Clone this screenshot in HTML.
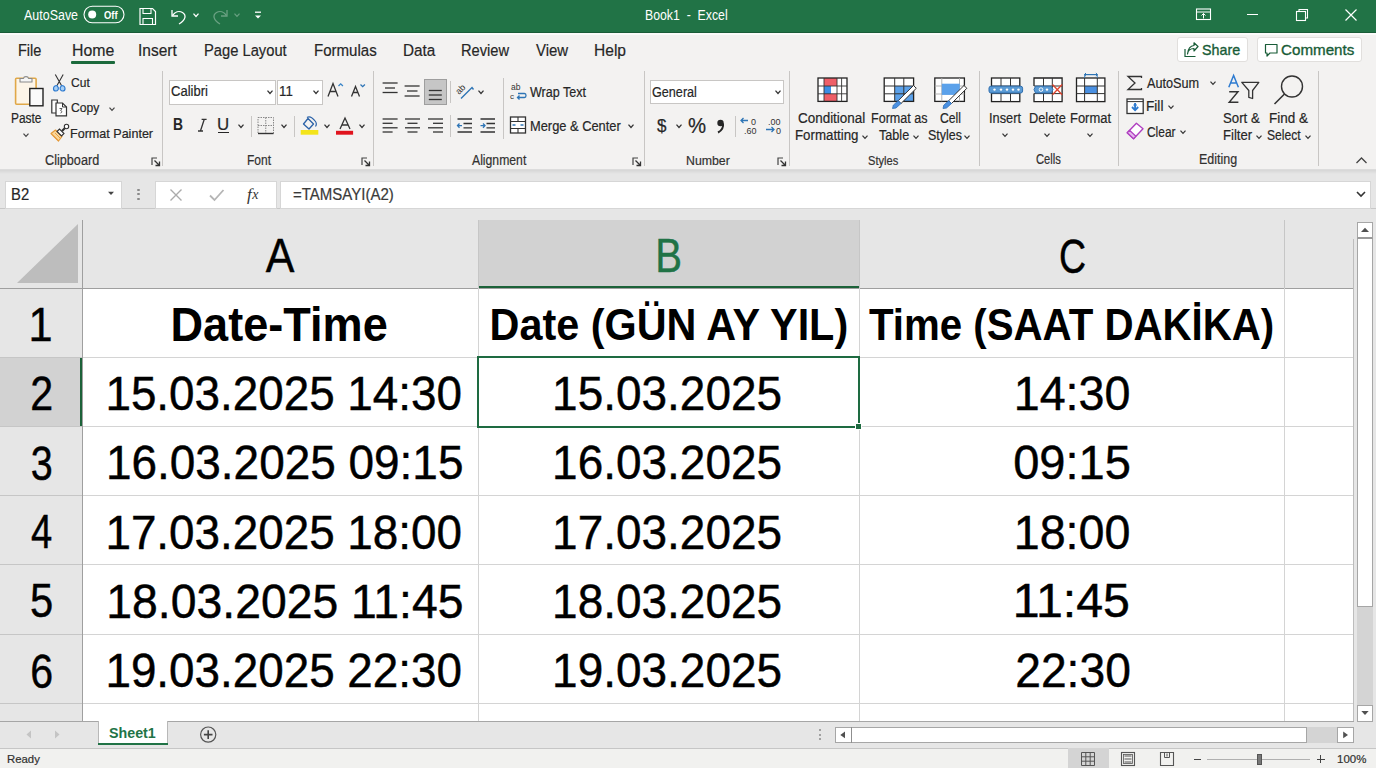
<!DOCTYPE html>
<html><head><meta charset="utf-8"><style>
*{box-sizing:border-box;margin:0;padding:0}
html,body{width:1376px;height:768px;overflow:hidden;background:#f3f2f1;font-family:"Liberation Sans",sans-serif;color:#262626}
div,span,svg{position:absolute}
.t{white-space:nowrap;line-height:1}
.cl{background:#d9d9d9}
</style></head><body>
<div style="left:0;top:169px;width:1376px;height:580px;background:#e6e6e6"></div>
<div style="left:82px;top:288px;width:1271px;height:433px;background:#fff"></div>
<div style="left:0;top:209px;width:1353px;height:79px;background:#e6e6e6"></div>
<div style="left:0;top:288px;width:82px;height:433px;background:#e6e6e6"></div>
<div style="left:478px;top:220px;width:381px;height:68px;background:#d2d2d2"></div>
<div style="left:478px;top:286px;width:381px;height:2px;background:#1c6239"></div>
<div style="left:0;top:357px;width:82px;height:69px;background:#d2d2d2"></div>
<div style="left:80px;top:357px;width:2px;height:69px;background:#1c6239"></div>
<div style="left:0;top:208px;width:1376px;height:1px;background:#c8c8c8"></div>
<div style="left:0;top:288px;width:1353px;height:1px;background:#9f9f9f"></div>
<div style="left:0;top:357px;width:82px;height:1px;background:#c6c6c6"></div>
<div style="left:82px;top:357px;width:1271px;height:1px;background:#d4d4d4"></div>
<div style="left:0;top:426px;width:82px;height:1px;background:#c6c6c6"></div>
<div style="left:82px;top:426px;width:1271px;height:1px;background:#d4d4d4"></div>
<div style="left:0;top:495px;width:82px;height:1px;background:#c6c6c6"></div>
<div style="left:82px;top:495px;width:1271px;height:1px;background:#d4d4d4"></div>
<div style="left:0;top:564px;width:82px;height:1px;background:#c6c6c6"></div>
<div style="left:82px;top:564px;width:1271px;height:1px;background:#d4d4d4"></div>
<div style="left:0;top:634px;width:82px;height:1px;background:#c6c6c6"></div>
<div style="left:82px;top:634px;width:1271px;height:1px;background:#d4d4d4"></div>
<div style="left:0;top:703px;width:82px;height:1px;background:#c6c6c6"></div>
<div style="left:82px;top:703px;width:1271px;height:1px;background:#d4d4d4"></div>
<div style="left:0;top:721px;width:1353px;height:1px;background:#bdbdbd"></div>
<div style="left:82px;top:220px;width:1px;height:501px;background:#9f9f9f"></div>
<div style="left:478px;top:220px;width:1px;height:68px;background:#c6c6c6"></div>
<div style="left:478px;top:288px;width:1px;height:433px;background:#d4d4d4"></div>
<div style="left:859px;top:220px;width:1px;height:68px;background:#c6c6c6"></div>
<div style="left:859px;top:288px;width:1px;height:433px;background:#d4d4d4"></div>
<div style="left:1284px;top:220px;width:1px;height:68px;background:#c6c6c6"></div>
<div style="left:1284px;top:288px;width:1px;height:433px;background:#d4d4d4"></div>
<div style="left:1353px;top:239px;width:1px;height:482px;background:#bdbdbd"></div>
<svg style="left:0;top:208px" width="82" height="80"><polygon points="17,75 78,75 78,16" fill="#bdbdbd"/></svg>
<div class="t" style="left:-220.10000000000002px;top:232.2px;width:1000px;text-align:center;font-size:48px;font-weight:normal;color:#000;-webkit-text-stroke:0.45px #000;"><span style="position:relative;display:inline-block;transform:scaleX(0.895)">A</span></div>
<div class="t" style="left:168.89999999999998px;top:232.0px;width:1000px;text-align:center;font-size:47.2px;font-weight:normal;color:#217346;-webkit-text-stroke:0.45px #217346;"><span style="position:relative;display:inline-block;transform:scaleX(0.8508)">B</span></div>
<div class="t" style="left:572.5999999999999px;top:231.8px;width:1000px;text-align:center;font-size:48.7px;font-weight:normal;color:#000;-webkit-text-stroke:0.45px #000;"><span style="position:relative;display:inline-block;transform:scaleX(0.7691)">C</span></div>
<div class="t" style="left:-459.32px;top:300.0px;width:1000px;text-align:center;font-size:49px;font-weight:normal;color:#000;-webkit-text-stroke:0.45px #000;"><span style="position:relative;display:inline-block;transform:scaleX(0.8835)">1</span></div>
<div class="t" style="left:-458.82px;top:369.36px;width:1000px;text-align:center;font-size:49px;font-weight:normal;color:#000;-webkit-text-stroke:0.45px #000;"><span style="position:relative;display:inline-block;transform:scaleX(0.8413)">2</span></div>
<div class="t" style="left:-458.32px;top:438.64px;width:1000px;text-align:center;font-size:49px;font-weight:normal;color:#000;-webkit-text-stroke:0.45px #000;"><span style="position:relative;display:inline-block;transform:scaleX(0.8067)">3</span></div>
<div class="t" style="left:-458.82px;top:507.0px;width:1000px;text-align:center;font-size:49px;font-weight:normal;color:#000;-webkit-text-stroke:0.45px #000;"><span style="position:relative;display:inline-block;transform:scaleX(0.7791)">4</span></div>
<div class="t" style="left:-458.82px;top:576.36px;width:1000px;text-align:center;font-size:49px;font-weight:normal;color:#000;-webkit-text-stroke:0.45px #000;"><span style="position:relative;display:inline-block;transform:scaleX(0.8522)">5</span></div>
<div class="t" style="left:-458.82px;top:646.64px;width:1000px;text-align:center;font-size:49px;font-weight:normal;color:#000;-webkit-text-stroke:0.45px #000;"><span style="position:relative;display:inline-block;transform:scaleX(0.8413)">6</span></div>
<div class="t" style="left:-221.0px;top:300.8px;width:1000px;text-align:center;font-size:47.4px;font-weight:bold;color:#000;"><span style="position:relative;display:inline-block;transform:scaleX(0.9515)">Date-Time</span></div>
<div class="t" style="left:168.5px;top:303.0px;width:1000px;text-align:center;font-size:43.8px;font-weight:bold;color:#000;"><span style="position:relative;display:inline-block;transform:scaleX(0.9447)">Date (G&Uuml;N AY YIL)</span></div>
<div class="t" style="left:571.5999999999999px;top:303.2px;width:1000px;text-align:center;font-size:43.8px;font-weight:bold;color:#000;"><span style="position:relative;display:inline-block;transform:scaleX(0.9185)">Time (SAAT DAK&#304;KA)</span></div>
<div class="t" style="left:-216.3px;top:370.0px;width:1000px;text-align:center;font-size:47.2px;font-weight:normal;color:#000;-webkit-text-stroke:0.45px #000;"><span style="position:relative;display:inline-block;transform:scaleX(0.9705)">15.03.2025 14:30</span></div>
<div class="t" style="left:166.89999999999998px;top:370.0px;width:1000px;text-align:center;font-size:47.2px;font-weight:normal;color:#000;-webkit-text-stroke:0.45px #000;"><span style="position:relative;display:inline-block;transform:scaleX(0.9737)">15.03.2025</span></div>
<div class="t" style="left:571.7px;top:370.0px;width:1000px;text-align:center;font-size:47.2px;font-weight:normal;color:#000;-webkit-text-stroke:0.45px #000;"><span style="position:relative;display:inline-block;transform:scaleX(0.9879)">14:30</span></div>
<div class="t" style="left:-215.8px;top:439.36px;width:1000px;text-align:center;font-size:47.2px;font-weight:normal;color:#000;-webkit-text-stroke:0.45px #000;"><span style="position:relative;display:inline-block;transform:scaleX(0.9733)">16.03.2025 09:15</span></div>
<div class="t" style="left:166.89999999999998px;top:439.36px;width:1000px;text-align:center;font-size:47.2px;font-weight:normal;color:#000;-webkit-text-stroke:0.45px #000;"><span style="position:relative;display:inline-block;transform:scaleX(0.9737)">16.03.2025</span></div>
<div class="t" style="left:572.2px;top:439.36px;width:1000px;text-align:center;font-size:47.2px;font-weight:normal;color:#000;-webkit-text-stroke:0.45px #000;"><span style="position:relative;display:inline-block;transform:scaleX(0.9966)">09:15</span></div>
<div class="t" style="left:-216.3px;top:508.64px;width:1000px;text-align:center;font-size:47.2px;font-weight:normal;color:#000;-webkit-text-stroke:0.45px #000;"><span style="position:relative;display:inline-block;transform:scaleX(0.9705)">17.03.2025 18:00</span></div>
<div class="t" style="left:166.89999999999998px;top:508.64px;width:1000px;text-align:center;font-size:47.2px;font-weight:normal;color:#000;-webkit-text-stroke:0.45px #000;"><span style="position:relative;display:inline-block;transform:scaleX(0.9737)">17.03.2025</span></div>
<div class="t" style="left:571.7px;top:508.64px;width:1000px;text-align:center;font-size:47.2px;font-weight:normal;color:#000;-webkit-text-stroke:0.45px #000;"><span style="position:relative;display:inline-block;transform:scaleX(0.9879)">18:00</span></div>
<div class="t" style="left:-215.3px;top:578.0px;width:1000px;text-align:center;font-size:47.2px;font-weight:normal;color:#000;-webkit-text-stroke:0.45px #000;"><span style="position:relative;display:inline-block;transform:scaleX(0.9816)">18.03.2025 11:45</span></div>
<div class="t" style="left:166.89999999999998px;top:578.0px;width:1000px;text-align:center;font-size:47.2px;font-weight:normal;color:#000;-webkit-text-stroke:0.45px #000;"><span style="position:relative;display:inline-block;transform:scaleX(0.9737)">18.03.2025</span></div>
<div class="t" style="left:571.7px;top:577.0px;width:1000px;text-align:center;font-size:47.2px;font-weight:normal;color:#000;-webkit-text-stroke:0.45px #000;"><span style="position:relative;display:inline-block;transform:scaleX(1.0239)">11:45</span></div>
<div class="t" style="left:-216.3px;top:647.36px;width:1000px;text-align:center;font-size:47.2px;font-weight:normal;color:#000;-webkit-text-stroke:0.45px #000;"><span style="position:relative;display:inline-block;transform:scaleX(0.9705)">19.03.2025 22:30</span></div>
<div class="t" style="left:166.89999999999998px;top:647.36px;width:1000px;text-align:center;font-size:47.2px;font-weight:normal;color:#000;-webkit-text-stroke:0.45px #000;"><span style="position:relative;display:inline-block;transform:scaleX(0.9737)">19.03.2025</span></div>
<div class="t" style="left:573.2px;top:647.36px;width:1000px;text-align:center;font-size:47.2px;font-weight:normal;color:#000;-webkit-text-stroke:0.45px #000;"><span style="position:relative;display:inline-block;transform:scaleX(0.979)">22:30</span></div>
<div style="left:477px;top:356px;width:383px;height:72px;border:2px solid #1e6b41"></div>
<div style="left:855px;top:423px;width:7px;height:7px;background:#1e6b41;border:1px solid #fff"></div>
<div style="left:0;top:748px;width:1376px;height:20px;background:#f1f1ef"></div>
<div style="left:0;top:748px;width:1376px;height:1px;background:#c6c6c6"></div>
<div class="t" style="left:6.5px;top:753.98px;font-size:11.48px;font-weight:normal;color:#323130;transform-origin:0 0;transform:scaleX(0.9902);-webkit-text-stroke:0.2px #323130;">Ready</div>
<div style="left:1068px;top:748px;width:41px;height:20px;background:#d4d4d4"></div>
<div class="t" style="left:1337.0px;top:753.98px;font-size:11.48px;font-weight:normal;color:#323130;transform-origin:0 0;transform:scaleX(1.0);-webkit-text-stroke:0.2px #323130;">100%</div>
<div style="left:5px;top:181px;width:117px;height:28px;background:#fff;border:1px solid #d6d6d6"></div>
<div class="t" style="left:10.64px;top:186.77px;font-size:16.57px;font-weight:normal;color:#262626;transform-origin:0 0;transform:scaleX(0.895);-webkit-text-stroke:0.2px #262626;">B2</div>
<div style="left:155px;top:181px;width:122px;height:28px;background:#fff;border:1px solid #d6d6d6"></div>
<div style="left:280px;top:181px;width:1091px;height:28px;background:#fff;border:1px solid #d6d6d6"></div>
<div class="t" style="left:293.26px;top:187.19px;font-size:15.84px;font-weight:normal;color:#3a3a3a;transform-origin:0 0;transform:scaleX(0.9483);-webkit-text-stroke:0.2px #3a3a3a;">=TAMSAYI(A2)</div>
<div style="left:0;top:0;width:1376px;height:33px;background:#217346"></div>
<div style="left:0;top:32px;width:1376px;height:1px;background:#1a5c38"></div>
<div class="t" style="left:23.52px;top:7.94px;font-size:14.24px;font-weight:normal;color:#fff;transform-origin:0 0;transform:scaleX(0.8756);">AutoSave</div>
<div class="t" style="left:645.42px;top:7.70px;font-size:14.53px;font-weight:normal;color:#fff;transform-origin:0 0;transform:scaleX(0.8466);">Book1&nbsp; - &nbsp;Excel</div>
<div style="left:0;top:33px;width:1376px;height:136px;background:#f3f2f1"></div>
<div style="left:0;top:33px;width:1376px;height:2px;background:#fbfbfa"></div>
<div class="t" style="left:18.32px;top:42.72px;font-size:16.86px;font-weight:normal;color:#262626;transform-origin:0 0;transform:scaleX(0.8606);-webkit-text-stroke:0.2px #262626;">File</div>
<div class="t" style="left:71.68px;top:42.72px;font-size:16.86px;font-weight:normal;color:#262626;transform-origin:0 0;transform:scaleX(0.9401);-webkit-text-stroke:0.2px #262626;">Home</div>
<div class="t" style="left:138.05px;top:42.72px;font-size:16.86px;font-weight:normal;color:#262626;transform-origin:0 0;transform:scaleX(0.9175);-webkit-text-stroke:0.2px #262626;">Insert</div>
<div class="t" style="left:204.21px;top:42.72px;font-size:16.86px;font-weight:normal;color:#262626;transform-origin:0 0;transform:scaleX(0.8736);-webkit-text-stroke:0.2px #262626;">Page Layout</div>
<div class="t" style="left:313.6px;top:42.72px;font-size:16.86px;font-weight:normal;color:#262626;transform-origin:0 0;transform:scaleX(0.8927);-webkit-text-stroke:0.2px #262626;">Formulas</div>
<div class="t" style="left:402.56px;top:42.72px;font-size:16.86px;font-weight:normal;color:#262626;transform-origin:0 0;transform:scaleX(0.9076);-webkit-text-stroke:0.2px #262626;">Data</div>
<div class="t" style="left:461.05px;top:42.72px;font-size:16.86px;font-weight:normal;color:#262626;transform-origin:0 0;transform:scaleX(0.8695);-webkit-text-stroke:0.2px #262626;">Review</div>
<div class="t" style="left:536.06px;top:42.72px;font-size:16.86px;font-weight:normal;color:#262626;transform-origin:0 0;transform:scaleX(0.8855);-webkit-text-stroke:0.2px #262626;">View</div>
<div class="t" style="left:594.18px;top:42.72px;font-size:16.86px;font-weight:normal;color:#262626;transform-origin:0 0;transform:scaleX(0.9226);-webkit-text-stroke:0.2px #262626;">Help</div>
<div style="left:71px;top:61px;width:43.5px;height:3px;background:#1b6a3c;border-radius:1px"></div>
<svg style="left:83px;top:5px" width="42" height="19" viewBox="0 0 42 19"><rect x="1" y="1.2" width="40" height="16.5" rx="8.2" fill="none" stroke="#fff" stroke-width="1.1"/><circle cx="9.2" cy="9.6" r="4" fill="#fff"/></svg>
<div class="t" style="left:104.37px;top:9.67px;font-size:10.9px;font-weight:bold;color:#fff;transform-origin:0 0;transform:scaleX(0.8602);">Off</div>
<svg style="left:138px;top:7px" width="20" height="19" viewBox="0 0 20 19"><path d="M2 1.5h12.5l3 3V17.5H2z" fill="none" stroke="#fff" stroke-width="1.2"/><path d="M5 1.5v5h8v-5" fill="none" stroke="#fff" stroke-width="1.1"/><path d="M5 17.5v-6h9.5v6" fill="none" stroke="#fff" stroke-width="1.1"/></svg>
<svg style="left:168px;top:6px" width="22" height="20" viewBox="0 0 22 20"><path d="M4 4v6h6" fill="none" stroke="#fff" stroke-width="1.3"/><path d="M4.5 9.5C7 6 11 4.5 14.5 6.5C18.5 9 18 14 11 18" fill="none" stroke="#fff" stroke-width="1.3"/></svg>
<svg style="left:190.7px;top:10.6px" width="10" height="8" viewBox="0 0 10 8"><path d="M2.5 2.6L5 5.4L7.5 2.6" fill="none" stroke="#fff" stroke-width="1.3"/></svg>
<svg style="left:209px;top:6px" width="22" height="20" viewBox="0 0 22 20"><path d="M18 4v6h-6" fill="none" stroke="#6aa183" stroke-width="1.3"/><path d="M17.5 9.5C15 6 11 4.5 7.5 6.5C3.5 9 4 14 11 18" fill="none" stroke="#6aa183" stroke-width="1.3"/></svg>
<svg style="left:231.5px;top:10.6px" width="10" height="8" viewBox="0 0 10 8"><path d="M2.5 2.6L5 5.4L7.5 2.6" fill="none" stroke="#6aa183" stroke-width="1.2"/></svg>
<svg style="left:252px;top:9px" width="12" height="12" viewBox="0 0 12 12"><path d="M3 3.2h6" stroke="#fff" stroke-width="1.3"/><path d="M3 6.5h6L6 9.5z" fill="#fff"/></svg>
<svg style="left:1194px;top:6px" width="20" height="17" viewBox="0 0 20 17"><rect x="2.5" y="3" width="14" height="10.5" fill="none" stroke="#fff" stroke-width="1.1"/><path d="M2.5 6h14" stroke="#fff" stroke-width="1"/><path d="M9.5 7.5v5M7.5 9.5l2-2 2 2" fill="none" stroke="#fff" stroke-width="1"/></svg>
<div style="left:1247px;top:14px;width:11px;height:1px;background:#fff"></div>
<svg style="left:1294px;top:7px" width="16" height="16" viewBox="0 0 16 16"><rect x="2.5" y="4.5" width="9" height="9" fill="none" stroke="#fff" stroke-width="1.1"/><path d="M5 4.5V2.5h8.5V11h-2" fill="none" stroke="#fff" stroke-width="1.1"/></svg>
<svg style="left:1344px;top:8px" width="14" height="14" viewBox="0 0 14 14"><path d="M1.5 1.5L12.5 12.5M12.5 1.5L1.5 12.5" stroke="#fff" stroke-width="1.2"/></svg>
<div style="left:1177px;top:37px;width:71px;height:25px;background:#fff;border:1px solid #e1dfdd;border-radius:3px"></div>
<svg style="left:1183px;top:42px" width="16" height="16" viewBox="0 0 16 16"><path d="M2 7v7.5h10.5" fill="none" stroke="#185c37" stroke-width="1.2"/><path d="M4.5 12C5 8 7.5 6.5 11 6.5V9l4-4.5L11 0.8v2.7C7 3.8 5 7 4.5 12z" fill="none" stroke="#185c37" stroke-width="1.2" stroke-linejoin="round"/></svg>
<div class="t" style="left:1201.65px;top:42.05px;font-size:15.41px;font-weight:normal;color:#185c37;transform-origin:0 0;transform:scaleX(0.9275);-webkit-text-stroke:0.35px #185c37">Share</div>
<div style="left:1257px;top:37px;width:105px;height:25px;background:#fff;border:1px solid #e1dfdd;border-radius:3px"></div>
<svg style="left:1263px;top:42px" width="16" height="16" viewBox="0 0 16 16"><path d="M2.5 2.5h11.5v8.5H7l-3 3v-3H2.5z" fill="none" stroke="#185c37" stroke-width="1.2" stroke-linejoin="round"/></svg>
<div class="t" style="left:1280.98px;top:42.05px;font-size:15.41px;font-weight:normal;color:#185c37;transform-origin:0 0;transform:scaleX(0.9845);-webkit-text-stroke:0.35px #185c37">Comments</div>
<div style="left:162px;top:71px;width:1px;height:95px;background:#c8c6c4"></div>
<div style="left:373px;top:71px;width:1px;height:95px;background:#c8c6c4"></div>
<div style="left:644px;top:71px;width:1px;height:95px;background:#c8c6c4"></div>
<div style="left:789px;top:71px;width:1px;height:95px;background:#c8c6c4"></div>
<div style="left:979px;top:71px;width:1px;height:95px;background:#c8c6c4"></div>
<div style="left:1118px;top:71px;width:1px;height:95px;background:#c8c6c4"></div>
<div style="left:1318px;top:71px;width:1px;height:95px;background:#c8c6c4"></div>
<div style="left:0;top:169px;width:1376px;height:1px;background:#dcdcdc"></div>
<div style="left:0;top:170px;width:1376px;height:4px;background:linear-gradient(#d6d6d6,#e6e6e6)"></div>
<div class="t" style="left:45.43px;top:152.67px;font-size:14.68px;font-weight:normal;color:#323130;transform-origin:0 0;transform:scaleX(0.8633);-webkit-text-stroke:0.2px #323130;">Clipboard</div>
<div class="t" style="left:247.18px;top:152.67px;font-size:14.68px;font-weight:normal;color:#323130;transform-origin:0 0;transform:scaleX(0.8218);-webkit-text-stroke:0.2px #323130;">Font</div>
<div class="t" style="left:472.4px;top:152.67px;font-size:14.68px;font-weight:normal;color:#323130;transform-origin:0 0;transform:scaleX(0.8318);-webkit-text-stroke:0.2px #323130;">Alignment</div>
<div class="t" style="left:686.36px;top:153.70px;font-size:13.23px;font-weight:normal;color:#323130;transform-origin:0 0;transform:scaleX(0.9317);-webkit-text-stroke:0.2px #323130;">Number</div>
<div class="t" style="left:868.37px;top:153.70px;font-size:13.23px;font-weight:normal;color:#323130;transform-origin:0 0;transform:scaleX(0.8412);-webkit-text-stroke:0.2px #323130;">Styles</div>
<div class="t" style="left:1035.85px;top:153.31px;font-size:13.81px;font-weight:normal;color:#323130;transform-origin:0 0;transform:scaleX(0.8118);-webkit-text-stroke:0.2px #323130;">Cells</div>
<div class="t" style="left:1198.68px;top:153.31px;font-size:13.81px;font-weight:normal;color:#323130;transform-origin:0 0;transform:scaleX(0.9024);-webkit-text-stroke:0.2px #323130;">Editing</div>
<svg style="left:150.5px;top:156.5px" width="10" height="10" viewBox="0 0 10 10"><path d="M1 8V1h5" fill="none" stroke="#444" stroke-width="1.2"/><path d="M3.5 3.5l4.5 4.5M8.5 4.5v4h-4" fill="none" stroke="#333" stroke-width="1.3"/></svg>
<svg style="left:361px;top:156.5px" width="10" height="10" viewBox="0 0 10 10"><path d="M1 8V1h5" fill="none" stroke="#444" stroke-width="1.2"/><path d="M3.5 3.5l4.5 4.5M8.5 4.5v4h-4" fill="none" stroke="#333" stroke-width="1.3"/></svg>
<svg style="left:632.2px;top:156.5px" width="10" height="10" viewBox="0 0 10 10"><path d="M1 8V1h5" fill="none" stroke="#444" stroke-width="1.2"/><path d="M3.5 3.5l4.5 4.5M8.5 4.5v4h-4" fill="none" stroke="#333" stroke-width="1.3"/></svg>
<svg style="left:777px;top:156.5px" width="10" height="10" viewBox="0 0 10 10"><path d="M1 8V1h5" fill="none" stroke="#444" stroke-width="1.2"/><path d="M3.5 3.5l4.5 4.5M8.5 4.5v4h-4" fill="none" stroke="#333" stroke-width="1.3"/></svg>
<svg style="left:1355px;top:156px" width="13" height="9" viewBox="0 0 13 9"><path d="M1.5 7L6.5 2L11.5 7" fill="none" stroke="#444" stroke-width="1.3"/></svg>
<svg style="left:12px;top:72px" width="34" height="36" viewBox="0 0 34 36"><rect x="3.6" y="6.2" width="20.5" height="26" rx="1" fill="#fdf5e8" stroke="#e0a848" stroke-width="1.6"/><path d="M8 10V6.5h3.5c0.3-2.5 4.7-2.5 5 0H20V10z" fill="#f6f6f6" stroke="#8a8a8a" stroke-width="1.1" stroke-linejoin="round"/><rect x="17.8" y="16.5" width="13.2" height="17.3" fill="#fafafa" stroke="#222" stroke-width="1.4"/></svg>
<div class="t" style="left:11.22px;top:110.70px;font-size:14.53px;font-weight:normal;color:#262626;transform-origin:0 0;transform:scaleX(0.8209);-webkit-text-stroke:0.2px #262626;">Paste</div>
<svg style="left:21.4px;top:131px" width="10" height="8" viewBox="0 0 10 8"><path d="M2.5 2.6L5 5.4L7.5 2.6" fill="none" stroke="#444" stroke-width="1.2"/></svg>
<svg style="left:51px;top:73px" width="17" height="20" viewBox="0 0 17 20"><path d="M4.3 1.5L10.5 12.5M12.2 1.5L6 12.5" stroke="#333" stroke-width="1.1" fill="none"/><path d="M6 12.5c-2 0-3.5 1.5-3.5 3.2 0 1.5 1.2 2.3 2.5 2.3 1.6 0 2.6-1.6 2.3-3.2z" fill="#a9d0f5" stroke="#2e7bd0" stroke-width="1.2"/><path d="M10.5 12.5c2 0 3.5 1.5 3.5 3.2 0 1.5-1.2 2.3-2.5 2.3-1.6 0-2.6-1.6-2.3-3.2z" fill="#a9d0f5" stroke="#2e7bd0" stroke-width="1.2"/></svg>
<div class="t" style="left:71.03px;top:76.77px;font-size:12.79px;font-weight:normal;color:#262626;transform-origin:0 0;transform:scaleX(0.9415);-webkit-text-stroke:0.2px #262626;">Cut</div>
<svg style="left:50px;top:98px" width="20" height="20" viewBox="0 0 20 20"><path d="M1.8 2h5.5v13H1.8z" fill="#fff" stroke="#333" stroke-width="1.2"/><path d="M6 5h6.5l4 4v8.8H6z" fill="#fff" stroke="#333" stroke-width="1.2"/><path d="M12.5 5v4h4" fill="none" stroke="#333" stroke-width="1"/><path d="M9.5 10.5h2.5l-1.3 2c1.3 0 1.6 2.5-0.2 2.5" fill="none" stroke="#333" stroke-width="0.8"/></svg>
<div class="t" style="left:70.92px;top:102.17px;font-size:12.79px;font-weight:normal;color:#262626;transform-origin:0 0;transform:scaleX(0.948);-webkit-text-stroke:0.2px #262626;">Copy</div>
<svg style="left:107.3px;top:104.5px" width="10" height="8" viewBox="0 0 10 8"><path d="M2.5 2.6L5 5.4L7.5 2.6" fill="none" stroke="#444" stroke-width="1.2"/></svg>
<svg style="left:50px;top:123px" width="20" height="20" viewBox="0 0 20 20"><path d="M1 10.5l7.5 7.5 3.5-4.5-6.5-6.5z" fill="#fbd79a" stroke="#e59a3a" stroke-width="1.2" stroke-linejoin="round"/><path d="M3 12.5l5 5M5 10l5 5" stroke="#e59a3a" stroke-width="0.9"/><path d="M7 8.5l2.5-2.5 4.5 4.5-2.5 2.5z" fill="#fff" stroke="#333" stroke-width="1.1"/><path d="M12 8l3.5-3.5" stroke="#333" stroke-width="2.2"/><circle cx="16.5" cy="3.5" r="2.2" fill="#fff" stroke="#333" stroke-width="1.1"/></svg>
<div class="t" style="left:70.0px;top:127.08px;font-size:13.37px;font-weight:normal;color:#262626;transform-origin:0 0;transform:scaleX(0.94);-webkit-text-stroke:0.2px #262626;">Format Painter</div>
<div style="left:168.5px;top:79.5px;width:107px;height:25px;background:#fff;border:1px solid #c8c6c4"></div>
<div class="t" style="left:170.55px;top:84.47px;font-size:14.68px;font-weight:normal;color:#262626;transform-origin:0 0;transform:scaleX(0.8865);-webkit-text-stroke:0.2px #262626;">Calibri</div>
<svg style="left:265px;top:88.4px" width="10" height="8" viewBox="0 0 10 8"><path d="M2.5 2.6L5 5.4L7.5 2.6" fill="none" stroke="#333" stroke-width="1.3"/></svg>
<div style="left:277px;top:79.5px;width:46px;height:25px;background:#fff;border:1px solid #c8c6c4"></div>
<div class="t" style="left:279.23px;top:84.47px;font-size:14.68px;font-weight:normal;color:#262626;transform-origin:0 0;transform:scaleX(0.9075);-webkit-text-stroke:0.2px #262626;">11</div>
<svg style="left:311px;top:88.4px" width="10" height="8" viewBox="0 0 10 8"><path d="M2.5 2.6L5 5.4L7.5 2.6" fill="none" stroke="#333" stroke-width="1.3"/></svg>
<svg style="left:326px;top:80px" width="20" height="19" viewBox="0 0 20 19"><path d="M2 16.5L7 3.5L12 16.5M4 11.5h6" fill="none" stroke="#333" stroke-width="1.3"/><path d="M12.5 6l2.2-2.2 2.2 2.2" fill="none" stroke="#3a86c8" stroke-width="1.3"/></svg>
<svg style="left:349px;top:80px" width="20" height="19" viewBox="0 0 20 19"><path d="M2.5 16.5L6.5 6.5L10.5 16.5M4 12.5h5" fill="none" stroke="#333" stroke-width="1.3"/><path d="M11.5 4.5l2.2 2.2 2.2-2.2" fill="none" stroke="#2e75b6" stroke-width="1.3"/></svg>
<div class="t" style="left:173.38px;top:116.48px;font-size:17.15px;font-weight:bold;color:#262626;transform-origin:0 0;transform:scaleX(0.81);">B</div>
<svg style="left:196px;top:117px" width="12" height="16" viewBox="0 0 12 16"><path d="M8.2 2.5L4.5 13.8M5.6 2.3h5M2 14h5" fill="none" stroke="#333" stroke-width="1.3"/></svg>
<div class="t" style="left:217.22px;top:116.48px;font-size:17.15px;font-weight:normal;color:#262626;transform-origin:0 0;transform:scaleX(0.9832);-webkit-text-stroke:0.2px #262626;">U</div>
<div style="left:218px;top:132px;width:11px;height:1.2px;background:#262626"></div>
<svg style="left:235.7px;top:122px" width="10" height="8" viewBox="0 0 10 8"><path d="M2.5 2.6L5 5.4L7.5 2.6" fill="none" stroke="#333" stroke-width="1.3"/></svg>
<div style="left:251px;top:116px;width:1px;height:21px;background:#c8c6c4"></div>
<svg style="left:256px;top:116px" width="20" height="20" viewBox="0 0 20 20"><rect x="2" y="1.5" width="15.5" height="16" fill="none" stroke="#888" stroke-width="1" stroke-dasharray="1.5 1"/><path d="M9.75 1.5v16M2 9.5h15.5" stroke="#888" stroke-width="1" stroke-dasharray="1.5 1"/><path d="M2 17.5h15.5" stroke="#333" stroke-width="1.4"/></svg>
<svg style="left:279.2px;top:122px" width="10" height="8" viewBox="0 0 10 8"><path d="M2.5 2.6L5 5.4L7.5 2.6" fill="none" stroke="#333" stroke-width="1.3"/></svg>
<div style="left:294px;top:116px;width:1px;height:21px;background:#c8c6c4"></div>
<svg style="left:299px;top:115px" width="22" height="22" viewBox="0 0 22 22"><path d="M4.5 9L9 3.5L14.5 9L10 14z" fill="none" stroke="#2b62a8" stroke-width="1.3" stroke-linejoin="round"/><path d="M8 2.5C10 1 13 2 16.5 6.5C17.5 8 17.5 10 16.5 11.5" fill="none" stroke="#2b62a8" stroke-width="1.2"/><rect x="1.7" y="15" width="17.6" height="4.7" fill="#f3e41a"/></svg>
<svg style="left:321.7px;top:122px" width="10" height="8" viewBox="0 0 10 8"><path d="M2.5 2.6L5 5.4L7.5 2.6" fill="none" stroke="#333" stroke-width="1.3"/></svg>
<svg style="left:335px;top:115px" width="20" height="22" viewBox="0 0 20 22"><path d="M5 14L10 3L15 14M7 10h6" fill="none" stroke="#333" stroke-width="1.3"/><rect x="1" y="15.8" width="17.1" height="3.9" fill="#e0141e"/></svg>
<svg style="left:356.5px;top:122px" width="10" height="8" viewBox="0 0 10 8"><path d="M2.5 2.6L5 5.4L7.5 2.6" fill="none" stroke="#333" stroke-width="1.3"/></svg>
<svg style="left:381px;top:80px" width="22" height="22" viewBox="0 0 22 22"><path d="M1.6 3h15" stroke="#333" stroke-width="1.3"/><path d="M4 8h10" stroke="#333" stroke-width="1.3"/><path d="M1.6 12.5h15" stroke="#333" stroke-width="1.3"/></svg>
<svg style="left:403px;top:83px" width="22" height="22" viewBox="0 0 22 22"><path d="M1.6 3h15" stroke="#333" stroke-width="1.3"/><path d="M4 8h10.5" stroke="#333" stroke-width="1.3"/><path d="M1.6 13h15" stroke="#333" stroke-width="1.3"/></svg>
<div style="left:424px;top:79px;width:23px;height:26px;background:#c6c6c6;border:1px solid #9e9e9e"></div>
<svg style="left:426px;top:82px" width="22" height="22" viewBox="0 0 22 22"><path d="M2.8 8.5h13" stroke="#333" stroke-width="1.3"/><path d="M2.8 13h13" stroke="#333" stroke-width="1.3"/><path d="M2.8 17.5h13" stroke="#333" stroke-width="1.3"/></svg>
<div style="left:450px;top:81px;width:1px;height:22px;background:#c8c6c4"></div>
<svg style="left:455px;top:81px" width="22" height="20" viewBox="0 0 22 20"><text x="1" y="11" font-size="9" font-family="Liberation Sans" fill="#333" transform="rotate(-45 6 9)">ab</text><path d="M6 17.5L17 6.5l1.5 2" fill="none" stroke="#2e75b6" stroke-width="1.4"/></svg>
<svg style="left:475.7px;top:88px" width="10" height="8" viewBox="0 0 10 8"><path d="M2.5 2.6L5 5.4L7.5 2.6" fill="none" stroke="#333" stroke-width="1.3"/></svg>
<svg style="left:381px;top:116px" width="22" height="22" viewBox="0 0 22 22"><path d="M1.6 3h15" stroke="#333" stroke-width="1.3"/><path d="M1.6 7.3h10" stroke="#333" stroke-width="1.3"/><path d="M1.6 11.8h15" stroke="#333" stroke-width="1.3"/><path d="M1.6 16h10" stroke="#333" stroke-width="1.3"/></svg>
<svg style="left:403px;top:116px" width="22" height="22" viewBox="0 0 22 22"><path d="M2 3h15" stroke="#333" stroke-width="1.3"/><path d="M4.5 7.3h10" stroke="#333" stroke-width="1.3"/><path d="M2 11.8h15" stroke="#333" stroke-width="1.3"/><path d="M4.5 16h10" stroke="#333" stroke-width="1.3"/></svg>
<svg style="left:426px;top:116px" width="22" height="22" viewBox="0 0 22 22"><path d="M2 3h15" stroke="#333" stroke-width="1.3"/><path d="M7 7.3h10" stroke="#333" stroke-width="1.3"/><path d="M2 11.8h15" stroke="#333" stroke-width="1.3"/><path d="M7 16h10" stroke="#333" stroke-width="1.3"/></svg>
<div style="left:450px;top:115px;width:1px;height:22px;background:#c8c6c4"></div>
<svg style="left:456px;top:116px" width="20" height="20" viewBox="0 0 20 20"><path d="M1.5 3h14.5M7.5 7.5h8.5M7.5 11.8h8.5M1.5 16h14.5" stroke="#333" stroke-width="1.3"/><path d="M1.5 9.6h4.5M3.5 7.5L1.5 9.6 3.5 11.7" fill="none" stroke="#2e75b6" stroke-width="1.3"/></svg>
<svg style="left:479px;top:116px" width="20" height="20" viewBox="0 0 20 20"><path d="M1.5 3h14.5M7.5 7.5h8.5M7.5 11.8h8.5M1.5 16h14.5" stroke="#333" stroke-width="1.3"/><path d="M1.5 9.6h4.5M4 7.5L6 9.6 4 11.7" fill="none" stroke="#2e75b6" stroke-width="1.3"/></svg>
<div style="left:502.5px;top:78px;width:1px;height:61px;background:#c8c6c4"></div>
<svg style="left:509px;top:82px" width="20" height="20" viewBox="0 0 20 20"><text x="2" y="8" font-size="8.5" font-family="Liberation Sans" fill="#333">ab</text><text x="1" y="16.5" font-size="8" font-family="Liberation Sans" fill="#333">c</text><path d="M9 11.5h6.5c2 0 2 4 0 4H8.5M10.5 13.5l-2 2 2 2" fill="none" stroke="#2e75b6" stroke-width="1.3"/></svg>
<div class="t" style="left:530.42px;top:85.04px;font-size:14.24px;font-weight:normal;color:#262626;transform-origin:0 0;transform:scaleX(0.8816);-webkit-text-stroke:0.2px #262626;">Wrap Text</div>
<svg style="left:508px;top:114px" width="20" height="22" viewBox="0 0 20 22"><rect x="2.5" y="3" width="15" height="16" fill="#fff" stroke="#333" stroke-width="1.3"/><path d="M2.5 7.5h15M2.5 14.5h15" stroke="#333" stroke-width="1.1"/><path d="M10 3v4.5M10 14.5V19" stroke="#333" stroke-width="1.1"/><path d="M4.5 11h3M12.5 11h3" stroke="#2e75b6" stroke-width="1.3"/></svg>
<div class="t" style="left:529.56px;top:118.57px;font-size:14.68px;font-weight:normal;color:#262626;transform-origin:0 0;transform:scaleX(0.8766);-webkit-text-stroke:0.2px #262626;">Merge &amp; Center</div>
<svg style="left:626.4px;top:122px" width="10" height="8" viewBox="0 0 10 8"><path d="M2.5 2.6L5 5.4L7.5 2.6" fill="none" stroke="#333" stroke-width="1.3"/></svg>
<div style="left:650px;top:80px;width:134px;height:24px;background:#fff;border:1px solid #c8c6c4"></div>
<div class="t" style="left:652.06px;top:84.70px;font-size:14.53px;font-weight:normal;color:#262626;transform-origin:0 0;transform:scaleX(0.87);-webkit-text-stroke:0.2px #262626;">General</div>
<svg style="left:772.7px;top:88.4px" width="10" height="8" viewBox="0 0 10 8"><path d="M2.5 2.6L5 5.4L7.5 2.6" fill="none" stroke="#333" stroke-width="1.3"/></svg>
<div class="t" style="left:657.0px;top:116.41px;font-size:19px;font-weight:normal;color:#262626;transform-origin:0 0;transform:scaleX(0.8966);-webkit-text-stroke:0.2px #262626;">$</div>
<svg style="left:674px;top:122px" width="10" height="8" viewBox="0 0 10 8"><path d="M2.5 2.6L5 5.4L7.5 2.6" fill="none" stroke="#333" stroke-width="1.3"/></svg>
<div class="t" style="left:688.02px;top:114.96px;font-size:21.66px;font-weight:normal;color:#262626;transform-origin:0 0;transform:scaleX(0.9383);-webkit-text-stroke:0.2px #262626;">%</div>
<svg style="left:713px;top:117px" width="14" height="18" viewBox="0 0 14 18"><circle cx="7.5" cy="6" r="3.2" fill="#262626"/><path d="M10 6.5C10.5 10 9 13.5 5 15.5" fill="none" stroke="#262626" stroke-width="2"/></svg>
<div style="left:734.5px;top:116px;width:1px;height:21px;background:#c8c6c4"></div>
<svg style="left:739px;top:115px" width="22" height="22" viewBox="0 0 22 22"><path d="M2 5.5h7M4.5 3L2 5.5 4.5 8" fill="none" stroke="#2e75b6" stroke-width="1.3"/><text x="12" y="9.5" font-size="9" font-family="Liberation Sans" fill="#333">0</text><text x="5" y="18.5" font-size="9" font-family="Liberation Sans" fill="#333">.60</text></svg>
<svg style="left:764px;top:115px" width="22" height="22" viewBox="0 0 22 22"><text x="4" y="9.5" font-size="9" font-family="Liberation Sans" fill="#333">.00</text><text x="12" y="18.5" font-size="9" font-family="Liberation Sans" fill="#333">0</text><path d="M2 14.5h8M7.5 12l2.5 2.5L7.5 17" fill="none" stroke="#2e75b6" stroke-width="1.3"/></svg>
<svg style="left:816px;top:76px" width="34" height="28" viewBox="0 0 34 28"><rect x="2" y="2" width="29" height="23.4" fill="#fff"/><rect x="8" y="2" width="13" height="23.4" fill="#ee5f68"/><rect x="8" y="10" width="7" height="7.8" fill="#3a8ee6"/><rect x="15" y="10" width="6" height="7.8" fill="#fff"/><rect x="2" y="2" width="29" height="23.4" fill="none" stroke="#222" stroke-width="1.3"/><path d="M2 10h29M2 17.8h29M8 2v23.4M21 2v23.4M25.6 2v23.4" stroke="#333" stroke-width="0.9"/></svg>
<div class="t" style="left:798.07px;top:110.92px;font-size:14.39px;font-weight:normal;color:#262626;transform-origin:0 0;transform:scaleX(0.9349);-webkit-text-stroke:0.2px #262626;">Conditional</div>
<div class="t" style="left:795.1px;top:128.42px;font-size:14.39px;font-weight:normal;color:#262626;transform-origin:0 0;transform:scaleX(0.924);-webkit-text-stroke:0.2px #262626;">Formatting</div>
<svg style="left:860px;top:132.5px" width="10" height="8" viewBox="0 0 10 8"><path d="M2.5 2.6L5 5.4L7.5 2.6" fill="none" stroke="#333" stroke-width="1.2"/></svg>
<svg style="left:882px;top:76px" width="40" height="34" viewBox="0 0 40 34"><rect x="2.2" y="2" width="29.4" height="23.4" fill="#fff"/><rect x="12.7" y="10" width="18.9" height="15.4" fill="#5ba1ea"/><rect x="2.2" y="2" width="29.4" height="23.4" fill="none" stroke="#222" stroke-width="1.3"/><path d="M2.2 10h29.4M2.2 17.8h29.4M12.7 2v23.4M21.8 2v23.4" stroke="#333" stroke-width="1"/><path d="M31.5 9.5l2.8 2.8L19 27.5l-2.8-2.8z" fill="#fff" stroke="#333" stroke-width="1"/><path d="M16.2 24.7l2.8 2.8-5 4.5-3.5 0.5 0.8-3.3z" fill="#4a90e2" stroke="#2e6fb8" stroke-width="0.8"/></svg>
<div class="t" style="left:870.71px;top:110.92px;font-size:14.39px;font-weight:normal;color:#262626;transform-origin:0 0;transform:scaleX(0.8731);-webkit-text-stroke:0.2px #262626;">Format as</div>
<div class="t" style="left:879.05px;top:128.42px;font-size:14.39px;font-weight:normal;color:#262626;transform-origin:0 0;transform:scaleX(0.8777);-webkit-text-stroke:0.2px #262626;">Table</div>
<svg style="left:911px;top:132.5px" width="10" height="8" viewBox="0 0 10 8"><path d="M2.5 2.6L5 5.4L7.5 2.6" fill="none" stroke="#333" stroke-width="1.2"/></svg>
<svg style="left:932px;top:76px" width="40" height="34" viewBox="0 0 40 34"><rect x="2.8" y="2" width="29.6" height="23.4" fill="#fff" stroke="#222" stroke-width="1.3"/><path d="M2.8 10h29.6M2.8 18h29.6M9.8 2v23.4M27.5 2v23.4" stroke="#aaa" stroke-width="0.9"/><rect x="9.8" y="7.7" width="18" height="11.2" fill="#5ba1ea"/><path d="M32 9.5l2.8 2.8L19.5 27.5l-2.8-2.8z" fill="#fff" stroke="#333" stroke-width="1"/><path d="M16.7 24.7l2.8 2.8-5 4.5-3.5 0.5 0.8-3.3z" fill="#4a90e2" stroke="#2e6fb8" stroke-width="0.8"/></svg>
<div class="t" style="left:939.95px;top:110.92px;font-size:14.39px;font-weight:normal;color:#262626;transform-origin:0 0;transform:scaleX(0.8449);-webkit-text-stroke:0.2px #262626;">Cell</div>
<div class="t" style="left:928.09px;top:128.42px;font-size:14.39px;font-weight:normal;color:#262626;transform-origin:0 0;transform:scaleX(0.866);-webkit-text-stroke:0.2px #262626;">Styles</div>
<svg style="left:962.3px;top:132.5px" width="10" height="8" viewBox="0 0 10 8"><path d="M2.5 2.6L5 5.4L7.5 2.6" fill="none" stroke="#333" stroke-width="1.2"/></svg>
<svg style="left:986px;top:75px" width="38" height="30" viewBox="0 0 38 30"><rect x="5.5" y="3" width="28.3" height="23.6" fill="#fff" stroke="#222" stroke-width="1.3"/><path d="M15 3v23.6M24.5 3v23.6M5.5 11h28.3M5.5 18.6h28.3" stroke="#333" stroke-width="1"/><rect x="3" y="11.2" width="33.6" height="6.8" rx="2" fill="#5b9bd5" stroke="#2f6fb0" stroke-width="1"/><circle cx="8.5" cy="14.6" r="1.2" fill="#fff"/><circle cx="15" cy="14.6" r="1.2" fill="#fff"/><circle cx="21" cy="14.6" r="1.2" fill="#fff"/><circle cx="27" cy="14.6" r="1.2" fill="#fff"/><circle cx="32.5" cy="14.6" r="1.2" fill="#fff"/></svg>
<div class="t" style="left:989.25px;top:110.84px;font-size:14.83px;font-weight:normal;color:#262626;transform-origin:0 0;transform:scaleX(0.8633);-webkit-text-stroke:0.2px #262626;">Insert</div>
<svg style="left:1000.2px;top:130.5px" width="10" height="8" viewBox="0 0 10 8"><path d="M2.5 2.6L5 5.4L7.5 2.6" fill="none" stroke="#333" stroke-width="1.2"/></svg>
<svg style="left:1031px;top:75px" width="34" height="30" viewBox="0 0 34 30"><path d="M3 11V3h28.1v23.6H3v-8" fill="#fff" stroke="#222" stroke-width="1.3"/><path d="M12.5 3v23.6M21.3 3v23.6M3 11h28.1M3 18.6h28.1" stroke="#333" stroke-width="1"/><path d="M4.5 11.2h15.5l2 3.4-2 3.4H4.5l-1.5-3.4z" fill="#5b9bd5" stroke="#2f6fb0" stroke-width="1"/><circle cx="10" cy="14.6" r="1.8" fill="none" stroke="#fff" stroke-width="0.9"/><circle cx="16" cy="14.6" r="1.2" fill="#fff"/><path d="M21.5 9.5l9.6 10.2M31.1 9.5l-9.6 10.2" stroke="#e0442e" stroke-width="1.3"/></svg>
<div class="t" style="left:1029.2px;top:110.84px;font-size:14.83px;font-weight:normal;color:#262626;transform-origin:0 0;transform:scaleX(0.8614);-webkit-text-stroke:0.2px #262626;">Delete</div>
<svg style="left:1042.3px;top:130.5px" width="10" height="8" viewBox="0 0 10 8"><path d="M2.5 2.6L5 5.4L7.5 2.6" fill="none" stroke="#333" stroke-width="1.2"/></svg>
<svg style="left:1074px;top:71px" width="34" height="33" viewBox="0 0 34 33"><rect x="2.5" y="7" width="28.4" height="23.6" fill="#fff" stroke="#222" stroke-width="1.3"/><rect x="10.6" y="15" width="12.7" height="7.6" fill="#4a90e2"/><path d="M10.6 7v23.6M23.3 7v23.6M2.5 15h28.4M2.5 22.6h28.4" stroke="#333" stroke-width="1"/><path d="M10.6 3.6h12.7" stroke="#2e75b6" stroke-width="1.2"/><path d="M12 2l-1.6 1.6L12 5.2M21.9 2l1.6 1.6-1.6 1.6" fill="none" stroke="#2e75b6" stroke-width="1"/><path d="M10.6 3.6v3.4M23.3 3.6v3.4" stroke="#2e75b6" stroke-width="0.8"/></svg>
<div class="t" style="left:1069.58px;top:110.84px;font-size:14.83px;font-weight:normal;color:#262626;transform-origin:0 0;transform:scaleX(0.8735);-webkit-text-stroke:0.2px #262626;">Format</div>
<svg style="left:1085px;top:130.5px" width="10" height="8" viewBox="0 0 10 8"><path d="M2.5 2.6L5 5.4L7.5 2.6" fill="none" stroke="#333" stroke-width="1.2"/></svg>
<svg style="left:1126px;top:75px" width="18" height="16" viewBox="0 0 18 16"><path d="M15.5 3V1.5H2l7 6.5-7 6.5h13.5V13" fill="none" stroke="#333" stroke-width="1.3"/></svg>
<div class="t" style="left:1147.05px;top:74.88px;font-size:15.26px;font-weight:normal;color:#262626;transform-origin:0 0;transform:scaleX(0.8318);-webkit-text-stroke:0.2px #262626;">AutoSum</div>
<svg style="left:1207.5px;top:78.5px" width="10" height="8" viewBox="0 0 10 8"><path d="M2.5 2.6L5 5.4L7.5 2.6" fill="none" stroke="#333" stroke-width="1.2"/></svg>
<svg style="left:1125px;top:97px" width="20" height="18" viewBox="0 0 20 18"><rect x="2" y="2" width="16.2" height="14.5" fill="#fff" stroke="#333" stroke-width="1.3"/><path d="M2 4.6h16.2" stroke="#333" stroke-width="1"/><path d="M10.1 6v7M7 10l3.1 3.2 3.1-3.2" fill="none" stroke="#2e7bd0" stroke-width="1.8"/><circle cx="10.1" cy="8" r="1.6" fill="#2e7bd0"/></svg>
<div class="t" style="left:1145.97px;top:99.14px;font-size:14.83px;font-weight:normal;color:#262626;transform-origin:0 0;transform:scaleX(0.9204);-webkit-text-stroke:0.2px #262626;">Fill</div>
<svg style="left:1165.6px;top:103px" width="10" height="8" viewBox="0 0 10 8"><path d="M2.5 2.6L5 5.4L7.5 2.6" fill="none" stroke="#333" stroke-width="1.2"/></svg>
<svg style="left:1125px;top:121px" width="20" height="20" viewBox="0 0 20 20"><path d="M2.2 11.8L11.4 2.2l6.6 5.5-9.4 10z" fill="#fff" stroke="#b040c0" stroke-width="1.4" stroke-linejoin="round"/><path d="M2.2 11.8l6.4 5.9 2.3-2.5-6.4-5.9z" fill="#e6b8ee" stroke="#b040c0" stroke-width="1.2" stroke-linejoin="round"/></svg>
<div class="t" style="left:1147.12px;top:124.54px;font-size:14.83px;font-weight:normal;color:#262626;transform-origin:0 0;transform:scaleX(0.8054);-webkit-text-stroke:0.2px #262626;">Clear</div>
<svg style="left:1178px;top:128px" width="10" height="8" viewBox="0 0 10 8"><path d="M2.5 2.6L5 5.4L7.5 2.6" fill="none" stroke="#333" stroke-width="1.2"/></svg>
<svg style="left:1226px;top:73px" width="36" height="32" viewBox="0 0 36 32"><path d="M2.8 14.3L7.6 2.5L12.4 14.3M4.6 10h6" fill="none" stroke="#2e7bd0" stroke-width="1.5"/><path d="M3.2 18.8h8.8L3.2 29.2h9.2" fill="none" stroke="#333" stroke-width="1.4"/><path d="M15.8 9.3h17L26.6 17.5v8l-3.8-1.2v-6.8z" fill="none" stroke="#333" stroke-width="1.3" stroke-linejoin="round"/></svg>
<div class="t" style="left:1223.1px;top:110.84px;font-size:14.83px;font-weight:normal;color:#262626;transform-origin:0 0;transform:scaleX(0.8918);-webkit-text-stroke:0.2px #262626;">Sort &amp;</div>
<div class="t" style="left:1223.1px;top:128.34px;font-size:14.83px;font-weight:normal;color:#262626;transform-origin:0 0;transform:scaleX(0.8828);-webkit-text-stroke:0.2px #262626;">Filter</div>
<svg style="left:1254.2px;top:132.5px" width="10" height="8" viewBox="0 0 10 8"><path d="M2.5 2.6L5 5.4L7.5 2.6" fill="none" stroke="#333" stroke-width="1.2"/></svg>
<svg style="left:1272px;top:73px" width="34" height="34" viewBox="0 0 34 34"><circle cx="20" cy="13.5" r="10.5" fill="none" stroke="#333" stroke-width="1.4"/><path d="M12.5 21L2.5 31" stroke="#333" stroke-width="1.6"/></svg>
<div class="t" style="left:1269.05px;top:110.84px;font-size:14.83px;font-weight:normal;color:#262626;transform-origin:0 0;transform:scaleX(0.9087);-webkit-text-stroke:0.2px #262626;">Find &amp;</div>
<div class="t" style="left:1267.18px;top:128.34px;font-size:14.83px;font-weight:normal;color:#262626;transform-origin:0 0;transform:scaleX(0.8173);-webkit-text-stroke:0.2px #262626;">Select</div>
<svg style="left:1302.6px;top:132.5px" width="10" height="8" viewBox="0 0 10 8"><path d="M2.5 2.6L5 5.4L7.5 2.6" fill="none" stroke="#333" stroke-width="1.2"/></svg>
<div style="left:1354px;top:209px;width:22px;height:539px;background:#e6e6e6"></div>
<div style="left:1357px;top:222px;width:16px;height:499px;background:#d4d4d4"></div>
<div style="left:1357px;top:222px;width:16px;height:17px;background:#fff;border:1px solid #a6a6a6;border-bottom:2px solid #9a9a9a"></div>
<svg style="left:1357px;top:222px" width="16" height="17" viewBox="0 0 16 17"><polygon points="4,10 12,10 8,5.8" fill="#505050"/></svg>
<div style="left:1357px;top:239px;width:16px;height:368px;background:#fff;border:1px solid #a6a6a6;border-top:none"></div>
<div style="left:1357px;top:705px;width:16px;height:16.5px;background:#fff;border:1px solid #a6a6a6"></div>
<svg style="left:1357px;top:705px" width="16" height="16" viewBox="0 0 16 16"><polygon points="4.3,6 11.7,6 8,10" fill="#505050"/></svg>
<div style="left:0;top:722px;width:1376px;height:26px;background:#e6e6e6"></div>
<div style="left:0;top:721px;width:1354px;height:1px;background:#a6a6a6"></div>
<svg style="left:24px;top:729px" width="10" height="11" viewBox="0 0 10 11"><polygon points="7,1.5 7,9.5 2.5,5.5" fill="#c4c4c4"/></svg>
<svg style="left:52px;top:729px" width="10" height="11" viewBox="0 0 10 11"><polygon points="3,1.5 3,9.5 7.5,5.5" fill="#c4c4c4"/></svg>
<div style="left:98px;top:721px;width:70px;height:24px;background:#fff;border-left:1px solid #b8b8b8;border-right:1px solid #b8b8b8"></div>
<div style="left:98px;top:743px;width:70px;height:2px;background:#217346"></div>
<div class="t" style="left:108.53px;top:725.20px;font-size:15.12px;font-weight:bold;color:#217346;transform-origin:0 0;transform:scaleX(0.9437);">Sheet1</div>
<svg style="left:198px;top:724px" width="21" height="21" viewBox="0 0 21 21"><circle cx="10.2" cy="10.6" r="7.6" fill="none" stroke="#555" stroke-width="1.2"/><path d="M10.2 6.3v8.6M5.9 10.6h8.6" stroke="#444" stroke-width="1.6"/></svg>
<div style="left:818.6px;top:729.3px;width:2.2px;height:2.2px;border-radius:50%;background:#8a8a8a"></div>
<div style="left:818.6px;top:733.6px;width:2.2px;height:2.2px;border-radius:50%;background:#8a8a8a"></div>
<div style="left:818.6px;top:737.7px;width:2.2px;height:2.2px;border-radius:50%;background:#8a8a8a"></div>
<div style="left:1307px;top:727px;width:30px;height:15.5px;background:#d4d4d4"></div>
<div style="left:835px;top:727px;width:472px;height:15.5px;background:#fff;border:1px solid #a6a6a6"></div>
<div style="left:850.5px;top:727px;width:1.8px;height:15.5px;background:#8f8f8f"></div>
<svg style="left:835px;top:727px" width="16" height="16" viewBox="0 0 16 16"><polygon points="10,4.5 10,11.3 5.3,7.9" fill="#505050"/></svg>
<div style="left:1337px;top:727px;width:16.5px;height:15.5px;background:#fff;border:1px solid #a6a6a6"></div>
<svg style="left:1337px;top:727px" width="16" height="16" viewBox="0 0 16 16"><polygon points="6.2,4.5 6.2,11.3 11,7.9" fill="#505050"/></svg>
<svg style="left:1080px;top:751px" width="16" height="16" viewBox="0 0 16 16"><path d="M1.5 1.5h13v13h-13z M1.5 5.8h13M1.5 10.2h13M5.8 1.5v13M10.2 1.5v13" fill="none" stroke="#555" stroke-width="1"/></svg>
<svg style="left:1120px;top:751px" width="16" height="16" viewBox="0 0 16 16"><rect x="1.5" y="1.5" width="13" height="13" fill="none" stroke="#555" stroke-width="1.1"/><path d="M4.5 5h7M4.5 8h7M4.5 11h7" stroke="#555" stroke-width="1"/><rect x="3.5" y="3.5" width="9" height="9" fill="none" stroke="#555" stroke-width="0.8"/></svg>
<svg style="left:1159px;top:751px" width="16" height="16" viewBox="0 0 16 16"><path d="M1.5 1.5h13v13h-13z" fill="none" stroke="#555" stroke-width="1.1"/><path d="M5.5 1.5v5h5v-5" fill="none" stroke="#555" stroke-width="1"/><path d="M8 2.5v3" stroke="#555" stroke-width="1"/></svg>
<div style="left:1193.5px;top:759px;width:7px;height:1.3px;background:#444"></div>
<div style="left:1207px;top:759px;width:103px;height:1px;background:#b0b0b0"></div>
<div style="left:1256.5px;top:754px;width:5.5px;height:10.5px;background:#777;border:1px solid #555"></div>
<div style="left:1316.8px;top:758.8px;width:8px;height:1.3px;background:#444"></div>
<div style="left:1320.15px;top:755.3px;width:1.3px;height:8px;background:#444"></div>
<svg style="left:106px;top:190px" width="10" height="7" viewBox="0 0 10 7"><polygon points="2,1.8 8,1.8 5,5" fill="#444"/></svg>
<div style="left:137.4px;top:188.5px;width:2.2px;height:2.2px;border-radius:50%;background:#8a8a8a"></div>
<div style="left:137.4px;top:193.0px;width:2.2px;height:2.2px;border-radius:50%;background:#8a8a8a"></div>
<div style="left:137.4px;top:198.0px;width:2.2px;height:2.2px;border-radius:50%;background:#8a8a8a"></div>
<svg style="left:168px;top:187px" width="16" height="16" viewBox="0 0 16 16"><path d="M2.5 2.5l11 11M13.5 2.5l-11 11" stroke="#ababab" stroke-width="1.4"/></svg>
<svg style="left:208px;top:187px" width="17" height="16" viewBox="0 0 17 16"><path d="M2 8.5l4.5 4.5L15.5 3" fill="none" stroke="#b5b5b5" stroke-width="1.8"/></svg>
<div class="t" style="left:247px;top:186px;font-size:17px;font-family:'Liberation Serif',serif;font-style:italic;color:#333">f<span style="position:relative;font-size:14px;left:0.5px;top:-1px">x</span></div>
<svg style="left:1354px;top:188px" width="14" height="12" viewBox="0 0 14 12"><path d="M3 4l4 4 4-4" fill="none" stroke="#333" stroke-width="1.6"/></svg>
</body></html>
